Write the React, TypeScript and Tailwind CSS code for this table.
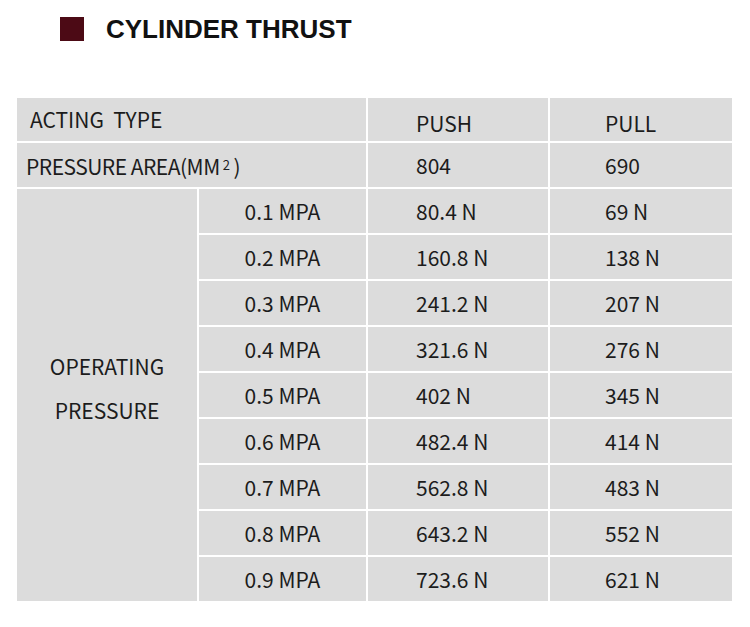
import React from 'react';

const rows = [
  { mpa: '0.1 MPA', push: '80.4 N', pull: '69 N' },
  { mpa: '0.2 MPA', push: '160.8 N', pull: '138 N' },
  { mpa: '0.3 MPA', push: '241.2 N', pull: '207 N' },
  { mpa: '0.4 MPA', push: '321.6 N', pull: '276 N' },
  { mpa: '0.5 MPA', push: '402 N', pull: '345 N' },
  { mpa: '0.6 MPA', push: '482.4 N', pull: '414 N' },
  { mpa: '0.7 MPA', push: '562.8 N', pull: '483 N' },
  { mpa: '0.8 MPA', push: '643.2 N', pull: '552 N' },
  { mpa: '0.9 MPA', push: '723.6 N', pull: '621 N' },
];

const cell = 'bg-[#dcdcdc] flex items-center';

export default function App() {
  return (
    <div className="w-[750px] h-[627px] bg-white text-[#1c1c1c] font-['Noto_Sans_CJK_SC','Noto_Sans',sans-serif]">
      <div className="flex items-center gap-[22px] pl-[60px] pt-[16px]">
        <div className="w-[24px] h-[24px] bg-[#4c0a15]" />
        <h1 className="font-['Liberation_Sans',Arial,sans-serif] font-bold text-[26px] leading-none text-[#111]">
          CYLINDER THRUST
        </h1>
      </div>

      <div className="ml-[17px] mt-[56px] grid grid-cols-[180px_167px_180px_182px] grid-rows-[43px_44px_repeat(9,44px)] gap-[2px] text-[21px] leading-none">
        <div className={`${cell} col-span-2 pl-[13px] pb-[1px] whitespace-pre`}>ACTING  TYPE</div>
        <div className={`${cell} pl-[48px] pt-[7px]`}>PUSH</div>
        <div className={`${cell} pl-[55px] pt-[7px]`}>PULL</div>

        <div className={`${cell} col-span-2 pl-[9px] pt-[3px] tracking-[-0.5px]`}>
          PRESSURE AREA(MM<sup className="text-[13px] relative -top-[2px] ml-[3px]">2</sup>
          <span className="ml-[4px]">)</span>
        </div>
        <div className={`${cell} pl-[48px]`}>804</div>
        <div className={`${cell} pl-[55px]`}>690</div>

        <div className={`${cell} row-span-9 flex-col justify-center pb-[14px] leading-[44px] text-center`}>
          <span>OPERATING</span>
          <span>PRESSURE</span>
        </div>
        {rows.map((r) => (
          <React.Fragment key={r.mpa}>
            <div className={`${cell} justify-center pt-[1px]`}>{r.mpa}</div>
            <div className={`${cell} pl-[48px]`}>{r.push}</div>
            <div className={`${cell} pl-[55px] pt-[1px]`}>{r.pull}</div>
          </React.Fragment>
        ))}
      </div>
    </div>
  );
}
